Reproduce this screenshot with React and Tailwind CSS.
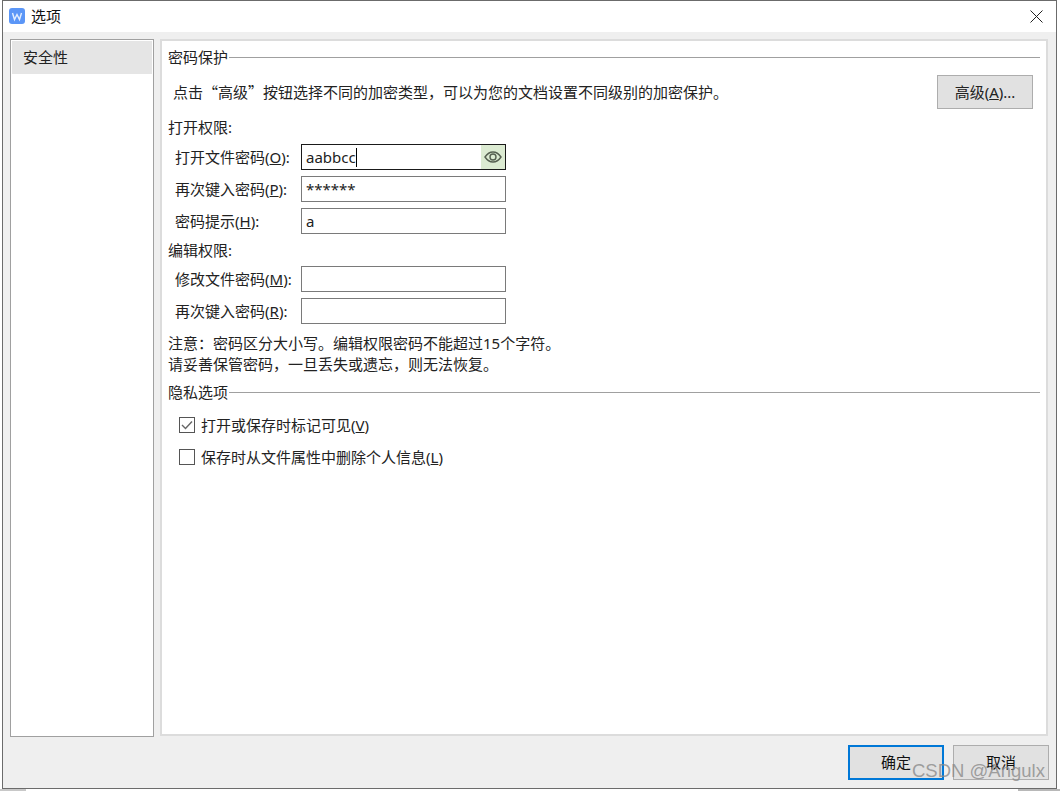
const font = { fontFamily: '"Noto Sans","Noto Sans CJK SC",sans-serif' };

function Section({ title, className = "" }) {
  return (
    <div className={`flex items-center h-5 ${className}`}>
      <span className="text-[15px] leading-5 text-[#222]">{title}</span>
      <div className="flex-1 h-[1px] bg-[#a0a0a0] ml-[1px]" />
    </div>
  );
}

function Field({ label, k, value, focus, eye, mt }) {
  return (
    <div className={`flex items-center h-[26px] ${mt}`}>
      <span className="w-[133px] pl-[7px] shrink-0 text-[15px] leading-5 text-[#222] whitespace-nowrap">
        {label}(<span className="underline">{k}</span>):
      </span>
      <div className={`w-[205px] h-[26px] flex items-stretch bg-white border ${focus ? "border-[#1a1a1a]" : "border-[#7a7a7a]"}`}>
        <div className="flex-1 pl-[4px] flex items-center text-[15px] text-[#222] leading-5">
          {value}
          {focus && <span className="w-[1px] h-[19px] bg-black" />}
        </div>
        {eye && (
          <div className="w-[24px] bg-[#dcebd2] flex items-center justify-center">
            <svg width="18" height="14" viewBox="0 0 18 14" fill="none" stroke="#555f50" strokeWidth="1.400">
              <path d="M1 7C3.500 3.300 6 2 9 2s5.500 1.300 8 5c-2.500 3.700-5 5-8 5s-5.500-1.300-8-5z" />
              <circle cx="9" cy="7" r="3" />
            </svg>
          </div>
        )}
      </div>
    </div>
  );
}

function Check({ checked, label, k, mt }) {
  return (
    <div className={`flex items-center h-5 pl-[11px] ${mt}`}>
      <div className="w-[16px] h-[16px] border border-[#555] bg-white flex items-center justify-center mr-[6px]">
        {checked && (
          <svg width="12" height="10" viewBox="0 0 12 10" fill="none" stroke="#666" strokeWidth="1.400">
            <path d="M1 5l3.500 3.500L11 1.500" />
          </svg>
        )}
      </div>
      <span className="text-[15px] leading-5 text-[#222]">
        {label}(<span className="underline">{k}</span>)
      </span>
    </div>
  );
}

export default function App() {
  return (
    <div className="relative w-[1060px] h-[791px] overflow-hidden bg-white pl-[2px] pr-[3px]" style={font}>
      <div className="absolute left-0 bottom-0 w-[26px] h-[2px] bg-[#c8c8c8]" />
      <div className="absolute left-[1018px] bottom-0 w-[42px] h-[2px] bg-[#b8b8b8]" />
      <div className="relative h-[789px] border border-[#6b6b6b] bg-[#efefef] flex flex-col">
        <div className="h-[31px] shrink-0 bg-white flex items-center pl-[6px] pr-[13px] pb-[1px]">
          <svg width="16" height="16" viewBox="0 0 16 16">
            <rect x="0" y="0" width="16" height="16" rx="3" fill="#5b96f7" />
            <path d="M3.500 5l2 6.500L8 6.500l2.500 5L12.500 5" fill="none" stroke="#e3eeff" strokeWidth="1.400" />
          </svg>
          <span className="ml-[6px] text-[15px] text-[#111] leading-5">选项</span>
          <svg className="ml-auto" width="13" height="13" viewBox="0 0 13 13" stroke="#222" strokeWidth="1" fill="none">
            <path d="M0.500 0.500l12 12M12.500 0.500l-12 12" />
          </svg>
        </div>
        <div className="flex flex-1 min-h-0 pt-[7px] pl-[7px] pr-[8px]">
          <div className="w-[144px] h-[698px] shrink-0 border border-[#a0a0a0] bg-white p-[1px]">
            <div className="h-[33px] bg-[#e5e5e5] pl-[11px] flex items-center text-[15px] text-[#222]">安全性</div>
          </div>
          <div className="ml-[6px] flex-1 h-[697px] border-2 border-[#dcdcdc] bg-white pt-[6px] pl-[6px] pr-[6px]">
            <Section title="密码保护" />
            <div className="flex items-center justify-between h-[34px] mt-[8px] pl-[5px] pr-[7px]">
              <span className="text-[15px] leading-5 text-[#222]">
                点击<span className="font-['Noto_Sans_CJK_SC']">“</span>高级<span className="font-['Noto_Sans_CJK_SC']">”</span>按钮选择不同的加密类型，可以为您的文档设置不同级别的加密保护。
              </span>
              <button className="w-[96px] h-[34px] bg-[#e1e1e1] border border-[#adadad] text-[15px] text-[#222]">
                高级(<span className="underline">A</span>)...
              </button>
            </div>
            <div className="mt-[8px] h-5 text-[15px] leading-5 text-[#222]">打开权限:</div>
            <Field label="打开文件密码" k="O" value="aabbcc" focus eye mt="mt-[7px]" />
            <Field label="再次键入密码" k="P" value="******" mt="mt-[6px]" />
            <Field label="密码提示" k="H" value="a" mt="mt-[6px]" />
            <div className="mt-[6px] h-5 text-[15px] leading-5 text-[#222]">编辑权限:</div>
            <Field label="修改文件密码" k="M" value="" mt="mt-[6px]" />
            <Field label="再次键入密码" k="R" value="" mt="mt-[6px]" />
            <div className="mt-[9px] text-[15px] leading-[21px] text-[#222]">
              <div>注意：密码区分大小写。编辑权限密码不能超过15个字符。</div>
              <div>请妥善保管密码，一旦丢失或遗忘，则无法恢复。</div>
            </div>
            <Section title="隐私选项" className="mt-[7px]" />
            <Check checked label="打开或保存时标记可见" k="V" mt="mt-[13px]" />
            <Check label="保存时从文件属性中删除个人信息" k="L" mt="mt-[12px]" />
          </div>
        </div>
        <div className="h-[52px] shrink-0 flex justify-end pr-[7px] pt-[9px]">
          <button className="w-[96px] h-[35px] bg-[#e1e1e1] border-2 border-[#0078d7] text-[15px] text-[#111]">确定</button>
          <button className="ml-[9px] w-[96px] h-[35px] bg-[#e1e1e1] border border-[#adadad] text-[15px] text-[#111]">取消</button>
        </div>
      </div>
      <div className="absolute left-[912px] top-[757px] text-[18.5px] leading-[28px] text-[#8a8a8a]/80 whitespace-nowrap" style={{ fontFamily: '"Liberation Sans",sans-serif' }}>
        CSDN @Angulx
      </div>
    </div>
  );
}
